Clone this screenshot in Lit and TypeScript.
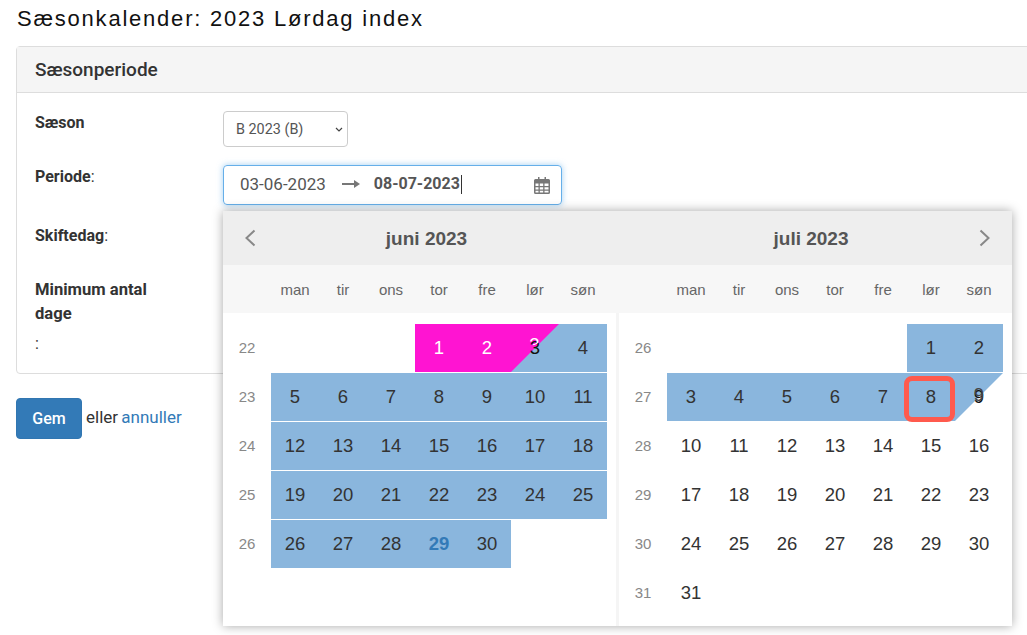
import { LitElement, html, css, nothing } from "lit";
import { customElement } from "lit/decorators.js";

type Cell = { d: number; cls: string; ghost?: string };

function monthCells(offset: number, days: number, classify: (d: number) => Cell): (Cell | null)[][] {
  const all: (Cell | null)[] = [];
  for (let i = 0; i < offset; i++) all.push(null);
  for (let d = 1; d <= days; d++) all.push(classify(d));
  const rows: (Cell | null)[][] = [];
  for (let i = 0; i < all.length; i += 7) rows.push(all.slice(i, i + 7));
  return rows;
}

const june = monthCells(3, 30, (d) => {
  if (d < 3) return { d, cls: "magenta" };
  if (d === 3) return { d, cls: "half-start", ghost: "white" };
  if (d === 29) return { d, cls: "range today" };
  return { d, cls: "range" };
});

const july = monthCells(5, 31, (d) => {
  if (d === 8) return { d, cls: "range marked" };
  if (d < 9) return { d, cls: "range" };
  if (d === 9) return { d, cls: "half-end", ghost: "dark" };
  return { d, cls: "" };
});

const WEEKDAYS = ["man", "tir", "ons", "tor", "fre", "lør", "søn"];

@customElement("app-root")
export class AppRoot extends LitElement {
  static styles = css`
    :host {
      display: block;
      position: relative;
      width: 1027px;
      height: 635px;
      overflow: hidden;
      background: #fff;
      font-family: Roboto, "Liberation Sans", sans-serif;
      font-size: 16px;
      line-height: 24px;
      color: #333;
    }
    .title {
      margin: 0;
      padding: 7px 0 0 17px;
      height: 46px;
      box-sizing: border-box;
      font-size: 22px;
      line-height: 24px;
      font-weight: 400;
      letter-spacing: 1.78px;
      color: #111;
      font-family: "Liberation Sans", sans-serif;
    }
    .panel {
      margin-left: 16px;
      width: 1040px;
      height: 328px;
      box-sizing: border-box;
      border: 1px solid #ddd;
      border-radius: 4px;
    }
    .panel-head {
      height: 46px;
      box-sizing: border-box;
      padding: 11px 18px;
      background: #f5f5f5;
      border-bottom: 1px solid #ddd;
      font-size: 19px;
      font-weight: 500;
      color: #333;
    }
    .panel-body {
      padding: 18px 18px 0;
    }
    .row {
      display: flex;
      height: 54px;
    }
    .row.tall {
      height: 59px;
    }
    .label {
      width: 188px;
      font-weight: 700;
    }
    .label .plain {
      font-weight: 400;
    }
    .label .min {
      display: block;
      width: 130px;
      font-size: 16.6px;
    }
    .label .colon {
      display: block;
      margin-top: 6px;
      font-weight: 400;
    }
    .select-wrap {
      position: relative;
      width: 125px;
      height: 36px;
    }
    .select-wrap svg {
      position: absolute;
      right: 5px;
      top: 16px;
      pointer-events: none;
    }
    select {
      display: block;
      width: 125px;
      height: 36px;
      padding: 0 12px;
      box-sizing: border-box;
      appearance: none;
      background: #fff;
      border: 1px solid #ccc;
      border-radius: 4px;
      color: #555;
      font-family: Roboto, sans-serif;
      font-size: 14.4px;
    }
    .range-input {
      width: 339px;
      height: 40px;
      box-sizing: border-box;
      display: flex;
      align-items: center;
      padding: 0 11px 0 16px;
      border: 1px solid #66afe9;
      border-radius: 4px;
      box-shadow: 0 0 6px rgba(102, 175, 233, 0.6);
      color: #555;
      font-size: 17px;
    }
    .range-input .date {
      padding-bottom: 2px;
    }
    .range-input .arrow {
      margin: 0 14px 2px 16px;
      display: block;
    }
    .range-input b {
      font-weight: 700;
      font-size: 16px;
      padding-bottom: 2px;
    }
    .caret {
      width: 1px;
      height: 19px;
      margin: 0 0 2px 1px;
      background: #333;
    }
    .range-input .cal {
      margin-left: auto;
      display: block;
    }
    .actions {
      display: flex;
      align-items: center;
      margin: 24px 0 0 16px;
      gap: 4px;
      font-size: 17px;
    }
    .actions .alt {
      padding-bottom: 4px;
      word-spacing: -1px;
    }
    .btn {
      width: 66px;
      height: 41px;
      box-sizing: border-box;
      background: #337ab7;
      border: 1px solid #3176b1;
      border-radius: 4px;
      color: #fff;
      font: 500 16px Roboto, sans-serif;
      padding: 0;
    }
    .actions a {
      color: #337ab7;
      text-decoration: none;
    }
    .picker {
      position: absolute;
      left: 223px;
      top: 211px;
      width: 789px;
      height: 415px;
      background: #fff;
      box-shadow: 0 0 10px rgba(0, 0, 0, 0.35);
      font-family: "Liberation Sans", sans-serif;
    }
    .picker-head {
      display: flex;
      height: 54px;
      background: #eee;
    }
    .head-side {
      display: flex;
      align-items: center;
      width: 394px;
    }
    .head-side.right {
      width: 393px;
      margin-left: 2px;
    }
    .nav {
      width: 40px;
      box-sizing: border-box;
      display: flex;
    }
    .nav.prev {
      padding-left: 21px;
    }
    .nav.next {
      padding-left: 7px;
    }
    .nav svg {
      display: block;
    }
    .spacer-l {
      width: 27px;
    }
    .spacer-r {
      width: 31px;
    }
    .month {
      flex: 1;
      text-align: center;
      font-size: 19px;
      font-weight: 700;
      color: #555;
      padding-top: 1px;
    }
    .weekdays {
      display: flex;
      height: 48px;
      background: #f7f7f7;
    }
    .wd-group {
      display: grid;
      grid-template-columns: repeat(7, 48px);
      padding-left: 48px;
      width: 394px;
      box-sizing: border-box;
    }
    .wd-group.right {
      width: 393px;
      margin-left: 2px;
    }
    .wd-group span {
      text-align: center;
      line-height: 50px;
      font-size: 15px;
      color: #666;
    }
    .months {
      display: flex;
      height: 313px;
    }
    .month-body {
      width: 393px;
      box-sizing: border-box;
      padding-top: 11px;
      display: grid;
      grid-template-columns: repeat(8, 48px);
      grid-auto-rows: 48px;
      row-gap: 1px;
    }
    .divider {
      width: 3px;
      background: #f5f5f5;
    }
    .wk {
      display: flex;
      align-items: center;
      justify-content: center;
      font-size: 15px;
      color: #888;
    }
    .day {
      position: relative;
      display: flex;
      align-items: center;
      justify-content: center;
      font-size: 18.5px;
      color: #333;
    }
    .day.range {
      background: #8ab6dd;
    }
    .day.magenta {
      background: #ff14d2;
      color: #fff;
    }
    .day.half-start {
      background: linear-gradient(
        to bottom right,
        #ff14d2 calc(50% - 0.5px),
        #8ab6dd calc(50% + 0.5px)
      );
      color: #111;
    }
    .day.half-end {
      background: linear-gradient(
        to bottom right,
        #8ab6dd calc(50% - 0.5px),
        #fff calc(50% + 0.5px)
      );
      color: #111;
    }
    .day.today {
      color: #337ab7;
      font-weight: 700;
    }
    .day.marked::after {
      content: "";
      position: absolute;
      left: -3px;
      top: 3px;
      width: 51px;
      height: 46px;
      box-sizing: border-box;
      border: 5px solid #ff5a4d;
      border-radius: 8px;
    }
    .ghost {
      position: absolute;
      left: 0;
      right: 0;
      text-align: center;
    }
    .ghost.white {
      top: 9px;
      margin-left: -1px;
      color: #fff;
      clip-path: polygon(0 0, 100% 0, 0 100%);
    }
    .ghost.dark {
      top: 10px;
      color: #444;
    }
  `;

  private renderMonth(rows: (Cell | null)[][], firstWeek: number) {
    return rows.map(
      (r, i) => html`<div class="wk">${firstWeek + i}</div>
        ${r.map((c) =>
          c
            ? html`<div class="day ${c.cls}">
                ${c.d}${c.ghost
                  ? html`<span class="ghost ${c.ghost}">${c.d}</span>`
                  : nothing}
              </div>`
            : html`<div></div>`
        )}
        ${Array.from({ length: 7 - r.length }, () => html`<div></div>`)}`
    );
  }

  render() {
    return html`
      <h1 class="title">Sæsonkalender: 2023 Lørdag index</h1>
      <section class="panel">
        <div class="panel-head">Sæsonperiode</div>
        <div class="panel-body">
          <div class="row">
            <div class="label">Sæson</div>
            <div class="select-wrap">
              <select><option>B 2023 (B)</option></select>
              <svg width="8" height="5" viewBox="0 0 8 5">
                <path d="M1 1l3 3 3-3" fill="none" stroke="#444" stroke-width="1.200" />
              </svg>
            </div>
          </div>
          <div class="row tall">
            <div class="label">Periode<span class="plain">:</span></div>
            <div class="range-input">
              <span class="date">03-06-2023</span>
              <svg class="arrow" width="18" height="12" viewBox="0 0 18 12">
                <path d="M0 6h15" stroke="#777" stroke-width="2" fill="none" />
                <path d="M12 2l6 4-6 4z" fill="#777" />
              </svg>
              <b>08-07-2023</b><span class="caret"></span>
              <svg class="cal" width="16" height="17" viewBox="0 0 16 17">
                <path
                  fill="#777"
                  fill-rule="evenodd"
                  d="M4 0h1.500v2h5V0H12v2h2.500A1.500 1.500 0 0 1 16 3.500v12a1.500 1.500 0 0 1-1.500 1.500h-13A1.500 1.500 0 0 1 0 15.500v-12A1.500 1.500 0 0 1 1.500 2H4zM1.500 6.500V9h3V6.500zm4.300 0V9h3.400V6.500zm4.700 0V9h4V6.500zM1.500 10.200V12.500h3v-2.300zm4.300 0v2.300h3.400v-2.300zm4.700 0v2.300h4v-2.300zM1.500 13.700v1.800h3v-1.800zm4.300 0v1.800h3.400v-1.800zm4.700 0v1.800h4v-1.800z"
                />
              </svg>
            </div>
          </div>
          <div class="row">
            <div class="label">Skiftedag<span class="plain">:</span></div>
          </div>
          <div class="row">
            <div class="label">
              <span class="min">Minimum antal dage</span>
              <span class="colon">:</span>
            </div>
          </div>
        </div>
      </section>
      <div class="actions">
        <button class="btn">Gem</button>
        <span class="alt">eller <a href="#">annuller</a></span>
      </div>

      <div class="picker">
        <div class="picker-head">
          <div class="head-side">
            <div class="nav prev">
              <svg width="12" height="18" viewBox="0 0 12 18">
                <path d="M10.500 1.500L2.500 9l8 7.500" fill="none" stroke="#888" stroke-width="2" />
              </svg>
            </div>
            <div class="month">juni 2023</div>
            <div class="spacer-l"></div>
          </div>
          <div class="head-side right">
            <div class="spacer-r"></div>
            <div class="month">juli 2023</div>
            <div class="nav next">
              <svg width="12" height="18" viewBox="0 0 12 18">
                <path d="M1.500 1.500L9.500 9l-8 7.500" fill="none" stroke="#888" stroke-width="2" />
              </svg>
            </div>
          </div>
        </div>
        <div class="weekdays">
          <div class="wd-group">${WEEKDAYS.map((w) => html`<span>${w}</span>`)}</div>
          <div class="wd-group right">${WEEKDAYS.map((w) => html`<span>${w}</span>`)}</div>
        </div>
        <div class="months">
          <div class="month-body">${this.renderMonth(june, 22)}</div>
          <div class="divider"></div>
          <div class="month-body">${this.renderMonth(july, 26)}</div>
        </div>
      </div>
    `;
  }
}
